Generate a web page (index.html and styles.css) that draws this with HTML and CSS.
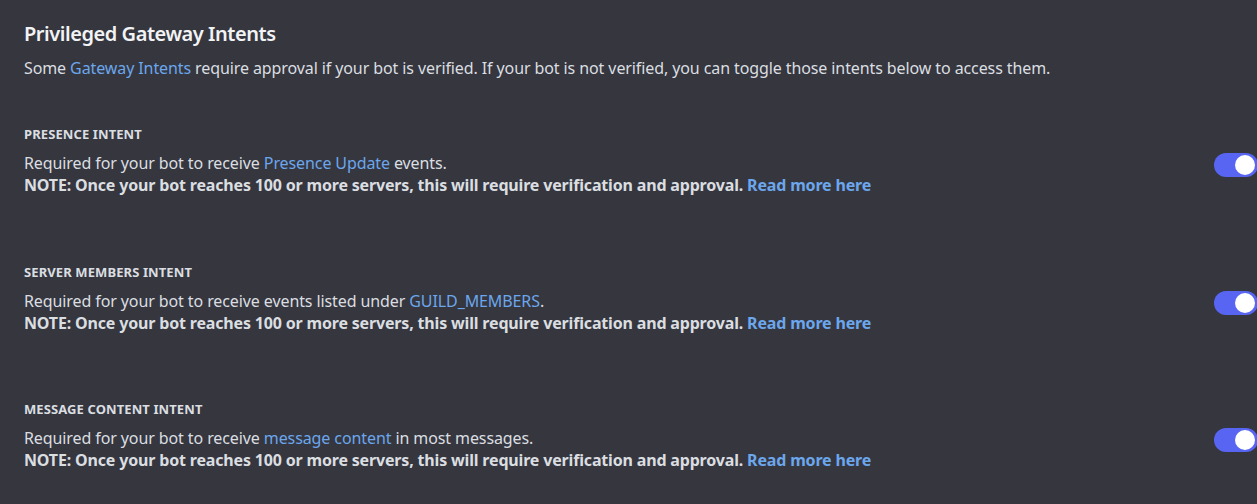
FILE: index.html
```html
<!DOCTYPE html>
<html lang="en">
<head>
<meta charset="utf-8">
<link rel="stylesheet" href="styles.css">
</head>
<body>
<main class="page">
  <h2 class="title">Privileged Gateway Intents</h2>
  <p class="intro">Some <a href="#">Gateway Intents</a> require approval if your bot is verified. If your bot is not verified, you can toggle those intents below to access them.</p>

  <section class="intent">
    <h3 class="intent-label">PRESENCE INTENT</h3>
    <div class="intent-row">
      <div class="intent-text">
        <div>Required for your bot to receive <a href="#">Presence Update</a> events.</div>
        <div class="note">NOTE: Once your bot reaches 100 or more servers, this will require verification and approval. <a href="#">Read more here</a></div>
      </div>
      <span class="toggle"><span class="knob"></span></span>
    </div>
  </section>

  <section class="intent">
    <h3 class="intent-label">SERVER MEMBERS INTENT</h3>
    <div class="intent-row">
      <div class="intent-text">
        <div>Required for your bot to receive events listed under <a href="#">GUILD_MEMBERS</a>.</div>
        <div class="note">NOTE: Once your bot reaches 100 or more servers, this will require verification and approval. <a href="#">Read more here</a></div>
      </div>
      <span class="toggle"><span class="knob"></span></span>
    </div>
  </section>

  <section class="intent">
    <h3 class="intent-label">MESSAGE CONTENT INTENT</h3>
    <div class="intent-row">
      <div class="intent-text">
        <div>Required for your bot to receive <a href="#">message content</a> in most messages.</div>
        <div class="note">NOTE: Once your bot reaches 100 or more servers, this will require verification and approval. <a href="#">Read more here</a></div>
      </div>
      <span class="toggle"><span class="knob"></span></span>
    </div>
  </section>
</main>
</body>
</html>
```
FILE: styles.css
```css
html, body {
  margin: 0;
  padding: 0;
  background: #35363e;
  overflow: hidden;
}
body {
  font-family: "Noto Sans", "Open Sans", sans-serif;
  color: #dbdee1;
  height: 504px;
}
.page {
  width: 1234px;
  padding: 22px 0 0 24px;
}
a {
  color: #6ca6ec;
  text-decoration: none;
}
.title {
  margin: 0;
  font-size: 20px;
  line-height: 24px;
  font-weight: 600;
  letter-spacing: -0.45px;
  color: #f2f3f5;
}
.intro {
  margin: 12px 0 0;
  font-size: 16px;
  line-height: 20px;
  letter-spacing: -0.1px;
}
.intent {
  margin-top: 48px;
}
.intent + .intent {
  margin-top: 67.5px;
}
.intent-label {
  margin: 0;
  font-size: 13px;
  line-height: 16px;
  font-weight: 700;
  letter-spacing: 0.1px;
  color: #dbdee1;
}
.intent-row {
  display: flex;
  justify-content: space-between;
  align-items: flex-start;
  margin-top: 10px;
}
.intent-text {
  font-size: 16px;
  line-height: 22px;
  letter-spacing: -0.1px;
}
.note {
  font-weight: 700;
  letter-spacing: -0.17px;
}
.toggle {
  flex: none;
  position: relative;
  width: 44px;
  height: 24px;
  margin-top: 1px;
  border-radius: 12px;
  background: #5865f2;
}
.knob {
  position: absolute;
  right: 3px;
  top: 2px;
  width: 20px;
  height: 20px;
  border-radius: 50%;
  background: #ffffff;
}
```
